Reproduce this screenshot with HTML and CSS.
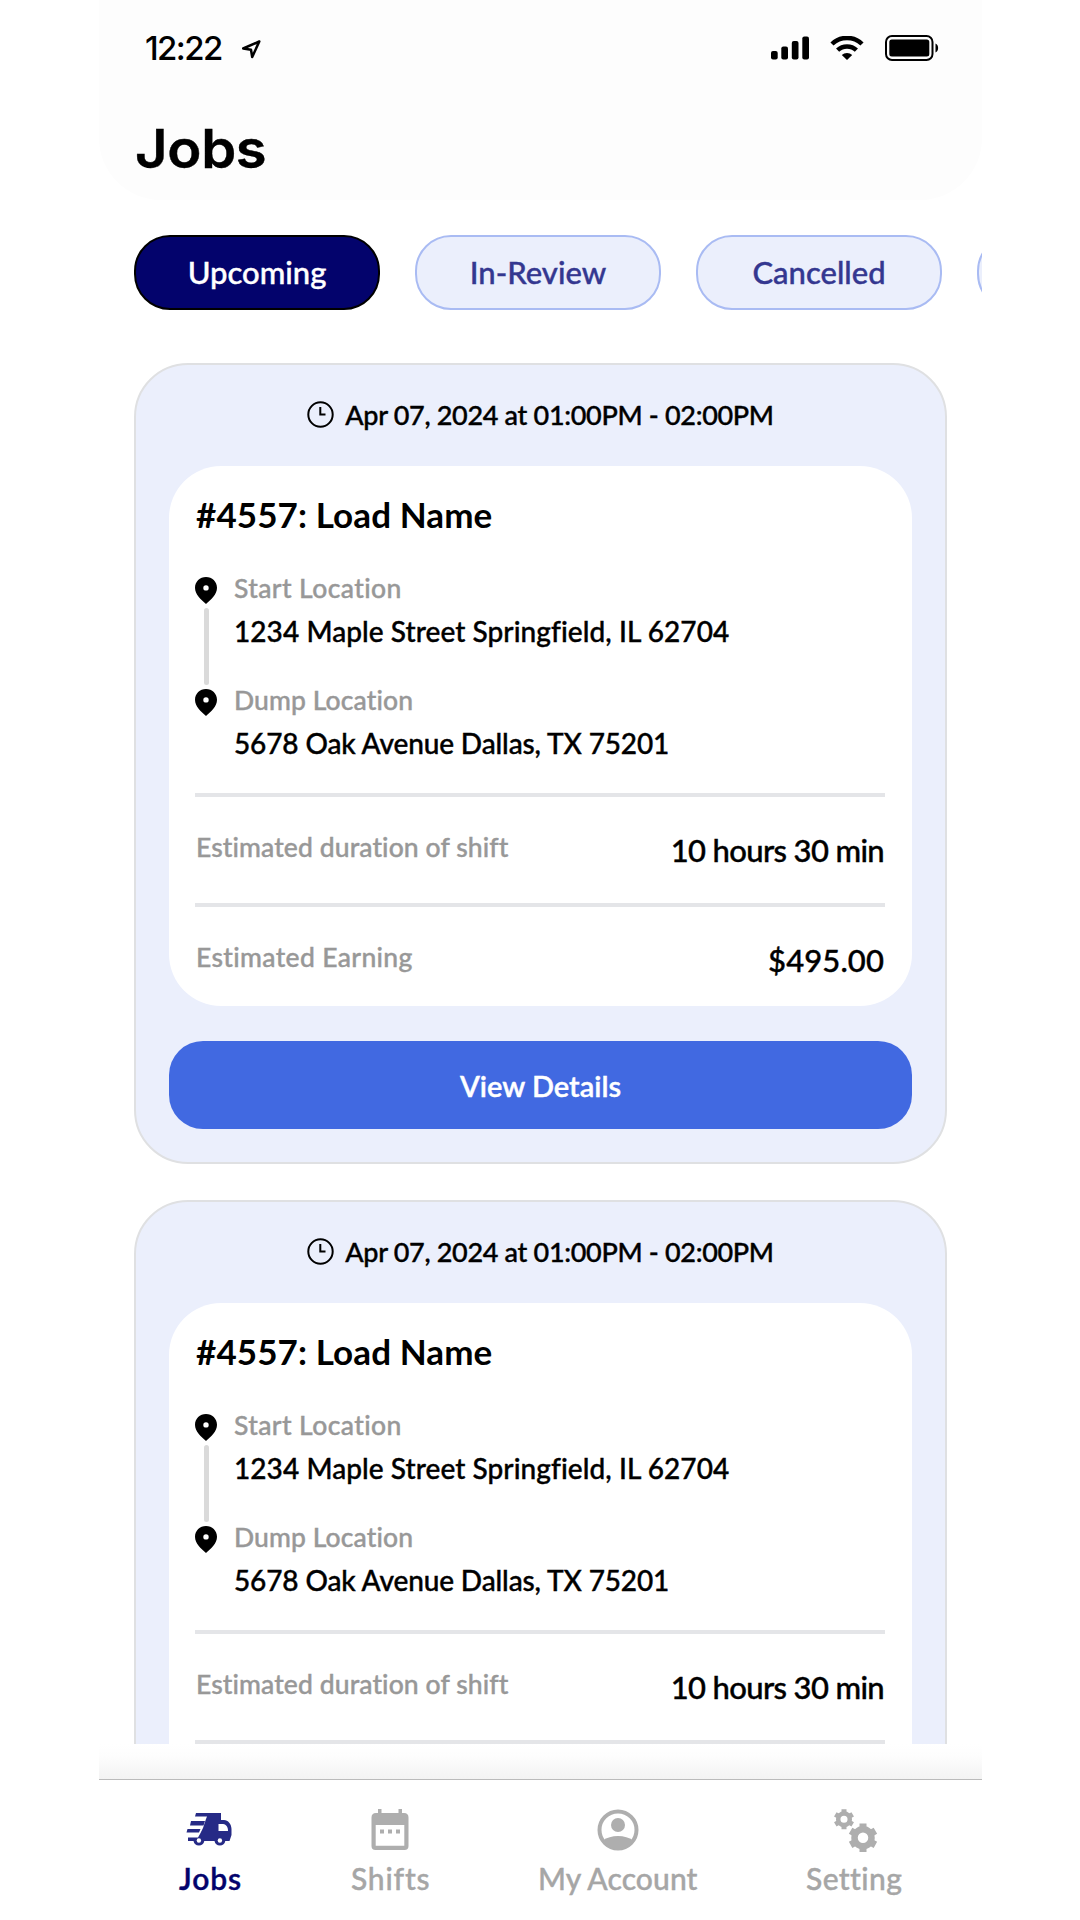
FILE: index.html
```html
<!DOCTYPE html>
<html lang="en">
<head>
  <meta charset="UTF-8">
  <meta name="viewport" content="width=device-width, initial-scale=1.0">
  <title>Jobs</title>
  <link rel="stylesheet" href="styles.css">
</head>
<body>
  <!-- Shared icons -->
  <svg class="defs" width="0" height="0">
    <symbol id="pin" viewBox="0 0 22 27">
      <path fill-rule="evenodd" d="M11 0C4.900 0 0 4.700 0 10.700C0 17.500 6 22.500 11 27C16 22.500 22 17.500 22 10.700C22 4.700 17.100 0 11 0ZM11 8.200A2.700 2.700 0 1 1 11 13.600A2.700 2.700 0 1 1 11 8.200Z"/>
    </symbol>
    <symbol id="clock" viewBox="0 0 27 27">
      <circle cx="13.500" cy="13.500" r="12.200" fill="none" stroke="#000" stroke-width="2"/>
      <path d="M13.300 6v7.500h5.200" fill="none" stroke="#000" stroke-width="2"/>
    </symbol>
  </svg>

  <div class="phone">
    <header class="header">
      <div class="status-bar">
        <span class="time">12:22</span>
        <svg class="location" width="19" height="19" viewBox="0 0 19 19">
          <path d="M17.300 1.500L1.200 8.500L9 9.700L10.200 17Z" fill="none" stroke="#000" stroke-width="2.500" stroke-linejoin="round"/>
        </svg>
        <div class="status-icons">
          <svg width="38" height="24" viewBox="0 0 38 24">
            <rect x="0" y="15" width="6.700" height="8.500" rx="2"/>
            <rect x="10.300" y="10.500" width="6.700" height="13" rx="2"/>
            <rect x="20.800" y="5" width="6.700" height="18.500" rx="2"/>
            <rect x="31.300" y="0.500" width="6.700" height="23" rx="2"/>
          </svg>
          <svg class="wifi" width="34" height="24" viewBox="0 0 34 24">
            <path d="M2 8A21.500 21.500 0 0 1 32 8" fill="none" stroke="#000" stroke-width="4.500"/>
            <path d="M7.600 14.200A13.500 13.500 0 0 1 26.400 14.200" fill="none" stroke="#000" stroke-width="4.500"/>
            <path d="M11.800 19A7.600 7.600 0 0 1 22.200 19L17 24Z"/>
          </svg>
          <svg class="battery" width="54" height="26" viewBox="0 0 54 26">
            <rect x="1" y="1" width="46.500" height="24" rx="6" fill="none" stroke="#000" stroke-width="2"/>
            <rect x="4.300" y="4.500" width="40" height="17" rx="2.500"/>
            <path d="M50.500 8.500C54 10 54 16 50.500 17.500Z"/>
          </svg>
        </div>
      </div>
      <h1>Jobs</h1>
    </header>

    <div class="tabs">
      <button class="tab active">Upcoming</button>
      <button class="tab">In-Review</button>
      <button class="tab">Cancelled</button>
      <button class="tab"></button>
    </div>

    <main class="job-list">
      <div class="job-card">
        <div class="job-date"><svg width="27" height="27"><use href="#clock"/></svg><span>Apr 07, 2024 at 01:00PM - 02:00PM</span></div>
        <div class="job-info">
          <h2>#4557: Load Name</h2>
          <div class="route">
            <div class="route-line">
              <svg width="22" height="27"><use href="#pin"/></svg>
              <div class="line"></div>
              <svg width="22" height="27"><use href="#pin"/></svg>
            </div>
            <div class="stops">
              <div class="label start">Start Location</div>
              <div class="address">1234 Maple Street Springfield, IL 62704</div>
              <div class="label dump">Dump Location</div>
              <div class="address dallas">5678 Oak Avenue Dallas, TX 75201</div>
            </div>
          </div>
          <div class="row">
            <span class="label duration">Estimated duration of shift</span>
            <span class="value hours">10 hours 30 min</span>
          </div>
          <div class="row">
            <span class="label earning">Estimated Earning</span>
            <span class="value">$495.00</span>
          </div>
        </div>
        <button class="details">View Details</button>
      </div>

      <div class="job-card">
        <div class="job-date"><svg width="27" height="27"><use href="#clock"/></svg><span>Apr 07, 2024 at 01:00PM - 02:00PM</span></div>
        <div class="job-info">
          <h2>#4557: Load Name</h2>
          <div class="route">
            <div class="route-line">
              <svg width="22" height="27"><use href="#pin"/></svg>
              <div class="line"></div>
              <svg width="22" height="27"><use href="#pin"/></svg>
            </div>
            <div class="stops">
              <div class="label start">Start Location</div>
              <div class="address">1234 Maple Street Springfield, IL 62704</div>
              <div class="label dump">Dump Location</div>
              <div class="address dallas">5678 Oak Avenue Dallas, TX 75201</div>
            </div>
          </div>
          <div class="row">
            <span class="label duration">Estimated duration of shift</span>
            <span class="value hours">10 hours 30 min</span>
          </div>
          <div class="row"></div>
        </div>
      </div>
    </main>

    <div class="nav-shadow"></div>
    <nav class="bottom-nav">
      <a class="nav-item nav-jobs">
        <svg width="46" height="36" viewBox="0 0 46 36">
          <path fill="#262a86" d="M10 2H35V9H38C42 9 45.500 13 45.500 18V24L43.500 30H39.300A5.500 5.500 0 0 1 28.500 30H18.300A5.500 5.500 0 0 1 7.500 30H2V26.500H12L14 23L17 17L20 8L21 5.500H9Z"/>
          <path fill="#262a86" d="M5 10H19L17.500 14.500H4ZM1.500 18H14.500L13 21.500H0.500Z"/>
          <path fill="#fff" d="M32.500 13H37C40.500 13.500 42 16 42 20H32.500Z"/>
          <circle cx="12.900" cy="29.500" r="2.200" fill="#fff"/>
          <circle cx="33.900" cy="29.500" r="2.200" fill="#fff"/>
        </svg>
        <span>Jobs</span>
      </a>
      <a class="nav-item nav-shifts">
        <svg width="38" height="42" viewBox="0 0 38 42">
          <path fill="#aeaeae" fill-rule="evenodd" d="M7 0H10.500V4H27.500V0H31V4H33Q37.500 4 37.500 8.500V37Q37.500 41 33.500 41H4.500Q0.500 41 0.500 37V8.500Q0.500 4 5 4H7ZM4.700 16V36.700H33.300V16Z"/>
          <path fill="#aeaeae" d="M9 20.500h4v4h-4zM17 20.500h4v4h-4zM25 20.500h4v4h-4z"/>
        </svg>
        <span>Shifts</span>
      </a>
      <a class="nav-item nav-account">
        <svg width="42" height="42" viewBox="0 0 42 42">
          <circle cx="21" cy="21" r="18.500" fill="none" stroke="#aeaeae" stroke-width="4"/>
          <circle cx="21" cy="16" r="7" fill="#aeaeae"/>
          <path fill="#aeaeae" d="M6 31.500C13 25.500 29 25.500 36 31.500C32 38 27 40.500 21 40.500S10 38 6 31.500Z"/>
        </svg>
        <span>My Account</span>
      </a>
      <a class="nav-item nav-setting">
        <svg width="44" height="44" viewBox="0 0 44 44">
          <g fill="none" stroke="#aeaeae">
            <circle cx="10" cy="10.300" r="5.800" stroke-width="4.500"/>
            <path d="M10 0.300V5M10 15.600V20.300M1.300 5.300L5.400 7.700M14.600 12.900L18.700 15.300M1.300 15.300L5.400 12.900M14.600 7.700L18.700 5.300" stroke-width="5"/>
            <circle cx="29" cy="28.800" r="8.500" stroke-width="6.500"/>
            <path d="M29 14.500V21M29 36.600V43.100M16.600 21.700L22.200 24.900M35.800 32.700L41.400 35.900M16.600 35.900L22.200 32.700M35.800 24.900L41.400 21.700" stroke-width="7"/>
          </g>
        </svg>
        <span>Setting</span>
      </a>
    </nav>
  </div>
</body>
</html>
```
FILE: styles.css
```css
* {
  box-sizing: border-box;
}

body {
  margin: 0;
  background: #fff;
  color: #000;
  font-family: Lato, sans-serif;
  font-weight: 500;
}

svg {
  display: block;
  flex-shrink: 0;
}

.defs {
  display: none;
}

button {
  font-family: inherit;
  padding: 0 0 2px;
}

.phone {
  width: 883px;
  height: 1920px;
  margin-left: 99px;
  overflow: hidden;
  display: flex;
  flex-direction: column;
  -webkit-text-stroke: 0.4px currentColor;
}

/* Header */
.header {
  height: 200px;
  flex-shrink: 0;
  background: #fdfdfd;
  border-radius: 0 0 62px 62px;
}

.status-bar {
  height: 96px;
  padding: 0 43px 0 46px;
  display: flex;
  align-items: center;
  -webkit-text-stroke: 0;
}

.time {
  font: 500 33px Inter, sans-serif;
  letter-spacing: -1.6px;
  width: 97px;
}

.location {
  margin-top: 2px;
}

.status-icons {
  margin-left: auto;
  display: flex;
  align-items: center;
}

.wifi {
  margin-left: 21px;
}

.battery {
  margin-left: 21px;
}

h1 {
  margin: 0;
  padding-left: 36px;
  font: 600 53px/106px Inter, sans-serif;
  letter-spacing: -0.3px;
  transform: scaleX(1.060);
  transform-origin: 36px 0;
}

/* Filter tabs */
.tabs {
  display: flex;
  gap: 35px;
  padding: 35px 0 0 35px;
}

.tab {
  width: 246px;
  height: 75px;
  flex-shrink: 0;
  border: 2px solid #a9bbf3;
  border-radius: 36px;
  background: #ebeffc;
  color: #343790;
  font-size: 31px;
  font-weight: 500;
}

.tab.active {
  background: #03036c;
  border-color: #000;
  color: #fff;
}

/* Job cards */
.job-list {
  height: 1381px;
  margin-top: 53px;
  padding: 0 35px;
  overflow: hidden;
}

.job-card {
  height: 801px;
  margin-bottom: 36px;
  padding: 0 33px;
  border: 2px solid #dfe0e2;
  border-radius: 54px;
  background: #ebeffc;
}

.job-date {
  height: 101px;
  padding-bottom: 2px;
  display: flex;
  align-items: center;
  justify-content: center;
  gap: 11px;
  font-size: 27px;
  letter-spacing: -0.32px;
}

.job-info {
  height: 540px;
  padding: 0 27px 0 26px;
  border-radius: 52px;
  background: #fff;
}

h2 {
  margin: 0;
  font-size: 35px;
  line-height: 96px;
  height: 98px;
  font-weight: 700;
  letter-spacing: 0.1px;
  padding-left: 1px;
  -webkit-text-stroke: 0;
}

.route {
  display: flex;
  gap: 17px;
  height: 229px;
}

.route-line {
  padding-top: 13px;
  display: flex;
  flex-direction: column;
  align-items: center;
}

.line {
  width: 5px;
  height: 77px;
  margin: 4px 0;
  border-radius: 3px;
  background: #dadada;
}

.label {
  color: #989898;
  font-size: 26.500px;
  line-height: 48px;
}

.start {
  letter-spacing: 0.4px;
}

.dump {
  margin-top: 24px;
  letter-spacing: 0.1px;
}

.duration {
  letter-spacing: 0.1px;
}

.earning {
  letter-spacing: 0.35px;
}

.address {
  height: 40px;
  font-size: 28px;
  line-height: 38px;
  letter-spacing: 0.07px;
}

.dallas {
  letter-spacing: -0.12px;
}

.row {
  height: 110px;
  border-top: 4px solid #e4e5e8;
  display: flex;
  align-items: center;
  justify-content: space-between;
}

.row .label {
  padding: 0 0 7px 1px;
}

.value {
  padding: 0 1px 1px 0;
  font-size: 31px;
  letter-spacing: 0.1px;
}

.hours {
  letter-spacing: -0.65px;
}

.details {
  width: 100%;
  height: 88px;
  margin-top: 35px;
  border: 0;
  border-radius: 34px;
  background: #4169e1;
  color: #fff;
  font-size: 29px;
  font-weight: 600;
  padding: 0;
}

/* Bottom navigation */
.nav-shadow {
  height: 35px;
  background: linear-gradient(#fff, #fdfdfd 35%, #f3f3f3);
}

.bottom-nav {
  flex: 1;
  display: flex;
  gap: 109px;
  padding: 29px 0 0 80px;
  border-top: 1px solid #bbb;
}

.nav-item {
  display: grid;
  grid-template-rows: 45px 48px;
  justify-items: center;
  align-content: start;
  color: #a6a6a6;
  font-size: 30px;
  line-height: 48px;
  white-space: nowrap;
}

.nav-jobs {
  width: 63px;
  color: #03036c;
  font-weight: 600;
  letter-spacing: 0.9px;
}

.nav-jobs svg {
  margin: 2px 3px 0 0;
}

.nav-shifts {
  width: 78px;
  letter-spacing: 0.8px;
}

.nav-shifts svg {
  margin-right: 2px;
}

.nav-account {
  width: 159px;
  letter-spacing: 0.1px;
}

.nav-setting {
  width: 95px;
  letter-spacing: 0.4px;
}

.nav-setting svg {
  margin-left: 4px;
}
```
